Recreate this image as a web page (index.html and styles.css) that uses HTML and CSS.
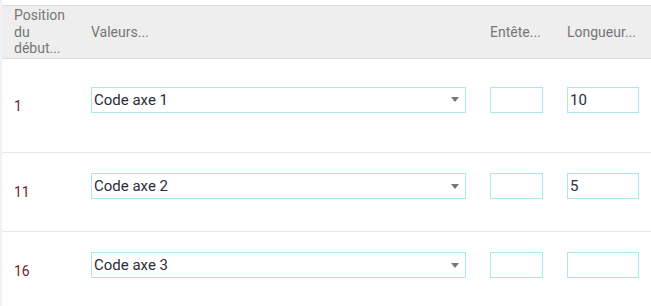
FILE: index.html
```html
<!DOCTYPE html>
<html lang="fr">
<head>
  <meta charset="UTF-8" />
  <meta name="viewport" content="width=device-width, initial-scale=1.0">
  <title>Découpage des axes</title>
  <link rel="stylesheet" href="styles.css">
</head>
<body>
  <div class="grid-wrap">
    <div class="grid-head">
      <div class="head-cell">Position du début...</div>
      <div class="head-cell">Valeurs...</div>
      <div class="head-cell">Entête...</div>
      <div class="head-cell">Longueur...</div>
    </div>

    <div class="grid-row row-first">
      <div class="cell pos">1</div>
      <div class="cell">
        <div class="field select">
          <span>Code axe 1</span>
          <span class="caret"></span>
        </div>
      </div>
      <div class="cell"><input class="field" type="text" value="" /></div>
      <div class="cell"><input class="field" type="text" value="10" /></div>
    </div>

    <div class="grid-row">
      <div class="cell pos">11</div>
      <div class="cell">
        <div class="field select">
          <span>Code axe 2</span>
          <span class="caret"></span>
        </div>
      </div>
      <div class="cell"><input class="field" type="text" value="" /></div>
      <div class="cell"><input class="field" type="text" value="5" /></div>
    </div>

    <div class="grid-row">
      <div class="cell pos">16</div>
      <div class="cell">
        <div class="field select">
          <span>Code axe 3</span>
          <span class="caret"></span>
        </div>
      </div>
      <div class="cell"><input class="field" type="text" value="" /></div>
      <div class="cell"><input class="field" type="text" value="" /></div>
    </div>
  </div>
</body>
</html>
```

FILE: styles.css
```css
* {
  margin: 0;
  padding: 0;
  box-sizing: border-box;
}

body {
  font-family: Roboto, 'Noto Sans', sans-serif;
  font-size: 14px;
  background: #f2f2f2;
  padding-left: 2px;
  overflow: hidden;
}

.grid-wrap {
  background: white;
  padding-top: 5px;
  min-height: 100vh;
}

.grid-head,
.grid-row {
  display: grid;
  grid-template-columns: 77px 399px 77px 96px;
}

.grid-head {
  background: #eeeeee;
  border-top: 1px solid #dddddd;
  border-bottom: 1px solid #dddddd;
  height: 54px;
  align-items: center;
}

.head-cell {
  padding: 0 12px;
  color: #767676;
  line-height: 16.5px;
}

.grid-row {
  align-items: center;
  height: 79px;
  border-bottom: 1px solid #e6e6e6;
}

.row-first {
  height: 94px;
}

.cell {
  padding: 0 12px;
}

.pos {
  color: #6b1f2e;
}

.field {
  display: block;
  width: 100%;
  height: 26px;
  margin-bottom: 12px;
  border: 1px solid #ade6ec;
  background: white;
  font-family: inherit;
  font-size: 15px;
  color: #2b2d3a;
  padding: 0 2px;
  outline: none;
}

.select {
  display: flex;
  align-items: center;
  justify-content: space-between;
  padding: 0 6px 0 2px;
}

.caret {
  width: 0;
  height: 0;
  border-left: 4px solid transparent;
  border-right: 4px solid transparent;
  border-top: 5px solid #777777;
}
```
